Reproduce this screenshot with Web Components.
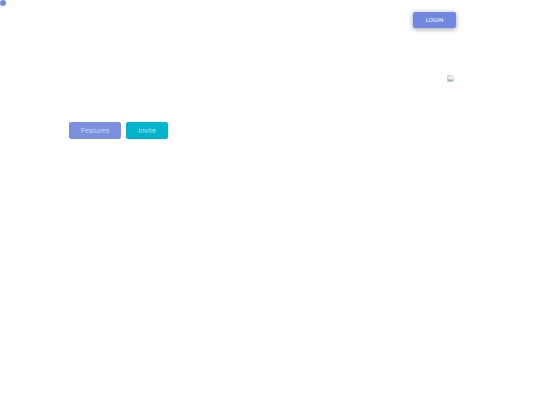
<!DOCTYPE html>
<html lang="en"><head><meta charset="utf-8"><title>Landing</title>
<style>html,body{margin:0;padding:0;background:#fff;font-family:Roboto,"Liberation Sans",sans-serif}</style>
</head><body>
<app-loader></app-loader>
<app-nav><app-button variant="login">LOGIN</app-button></app-nav>
<hero-image></hero-image>
<hero-actions><app-button variant="primary">Features</app-button><app-button variant="accent">Invite</app-button></hero-actions>
<script>
function def(name,html){customElements.define(name,class extends HTMLElement{constructor(){super();this.attachShadow({mode:'open'}).innerHTML=html}})}
def('app-loader',`<style>:host{display:block;position:absolute;left:0;top:0;width:6px;height:6px;border-radius:50%;background:#6f8be0}</style>`);
def('app-nav',`<style>:host{display:flex;justify-content:flex-end;box-sizing:border-box;height:40px;padding:12px 84px 0 0}</style><slot></slot>`);
def('hero-image',`<style>:host{display:flex;justify-content:flex-end;box-sizing:border-box;height:82px;padding:35px 86px 0 0}svg{display:block}</style>
<svg width="7" height="7" viewBox="0 0 7 7" aria-hidden="true"><path d="M.5.5H4.6L6.5 2.4V6.5H.5Z" fill="#f4f6f8" stroke="#b8bcc2" stroke-width=".7"/><path d="M1 6V4.6L2.4 4 4 4.8 5 4.2 6 5V6Z" fill="#8fc48a"/><path d="M1 1.2h2.4v1.6H1Z" fill="#cfdcf2"/></svg>`);
def('hero-actions',`<style>:host{display:flex;gap:5px;padding-left:69px}</style><slot></slot>`);
customElements.define('app-button',class extends HTMLElement{constructor(){super();const v=this.getAttribute('variant');
const s={login:'width:43px;height:16px;background:#7088e0;font-size:6.2px;font-weight:400;color:#f4f6ff;box-shadow:0 1px 5px rgba(0,0,0,.4)',primary:'width:52px;height:17px;background:#7b90e0;font-size:7.4px;color:#e4e9fa',accent:'width:42px;height:17px;background:#00b4cc;font-size:7.4px;color:#e0f7fa'}[v];
this.attachShadow({mode:'open'}).innerHTML=`<style>:host{display:inline-flex;align-items:center;justify-content:center;box-sizing:border-box;border-radius:2px;font-weight:300;font-family:Roboto,"Liberation Sans",sans-serif;${s}}</style><slot></slot>`}});
</script>
</body></html>
